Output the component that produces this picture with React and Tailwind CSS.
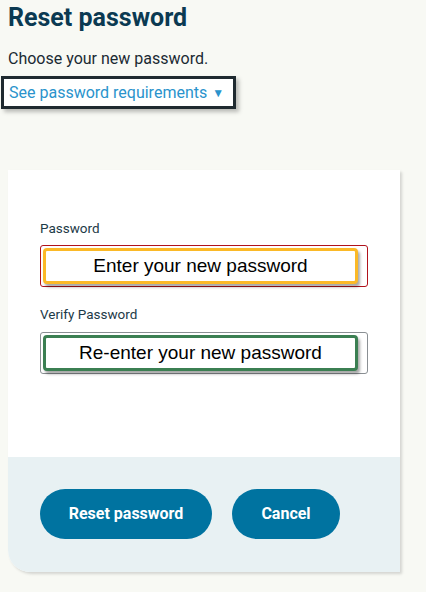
import React from "react";

const Field = ({ label, hint, outer, inner, labelGap }) => (
  <div className="flex flex-col">
    <label className={`text-[13.5px] text-[#1d3a48] leading-4 ${labelGap}`}>{label}</label>
    <div className={`h-[42px] w-[328px] rounded-[3px] border bg-white pl-[2px] pr-[9px] py-[2px] ${outer}`}>
      <div
        className={`flex h-full items-center justify-center rounded-[4px] border-[3px] bg-white text-[19px] text-black shadow-[2px_3px_3px_rgba(0,0,0,0.35)] ${inner}`}
        style={{ fontFamily: "Arial, 'Liberation Sans', sans-serif" }}
      >
        {hint}
      </div>
    </div>
  </div>
);

const App = () => {
  return (
    <div
      className="h-[592px] w-[426px] overflow-hidden bg-[#f8f9f4] text-[#1b2a33]"
      style={{ fontFamily: "Roboto, 'Noto Sans', sans-serif" }}
    >
      <div className="px-2 pt-[2px]">
        <h1 className="text-[25px] font-bold leading-8 text-[#0b3a52]">Reset password</h1>
        <p className="mt-[15px] text-[16px] leading-5">Choose your new password.</p>
      </div>

      <div className="ml-[1px] mt-[7px] inline-flex h-[33px] w-[235px] items-center border-[3px] border-[#1f2a30] bg-white pl-[5px] pt-[1px] shadow-[3px_3px_4px_rgba(0,0,0,0.25)]">
        <span className="text-[16px] text-[#2a93cc]">See password requirements</span>
        <span className="ml-[5px] text-[12px] text-[#2a93cc]">▼</span>
      </div>

      <div className="ml-2 mt-[61px] w-[392px] overflow-hidden rounded-bl-[22px] bg-white shadow-[2px_2px_3px_rgba(0,0,0,0.15)]">
        <div className="flex h-[287px] flex-col gap-[19px] pl-8 pt-[50px]">
          <Field
            label="Password"
            hint="Enter your new password"
            outer="border-[#b0121b]"
            inner="border-[#fbb927]"
            labelGap="mb-[9px]"
          />
          <Field
            label="Verify Password"
            hint="Re-enter your new password"
            outer="border-[#8a8f93]"
            inner="border-[#3b7f52]"
            labelGap="mb-[10px]"
          />
        </div>
        <div className="flex h-[115px] gap-5 bg-[#e8f1f3] pl-8 pt-8">
          <button className="h-[50px] w-[172px] rounded-full bg-[#0073a0] text-[16px] font-bold text-white">
            Reset password
          </button>
          <button className="h-[50px] w-[108px] rounded-full bg-[#0073a0] text-[16px] font-bold text-white">
            Cancel
          </button>
        </div>
      </div>
    </div>
  );
};

export default App;
